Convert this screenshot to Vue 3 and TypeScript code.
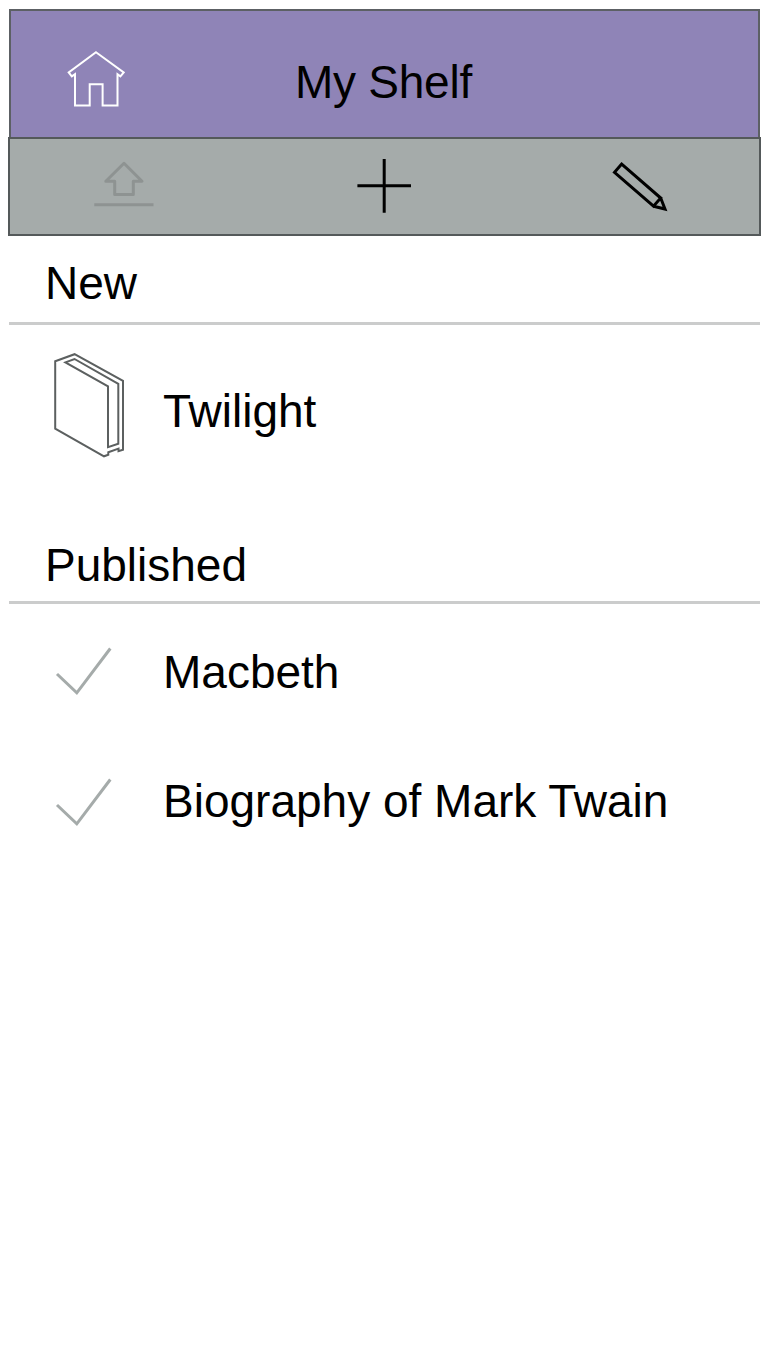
<script setup lang="ts">
interface Section {
  title: string
  kind: 'new' | 'published'
  books: string[]
}

const sections: Section[] = [
  { title: 'New', kind: 'new', books: ['Twilight'] },
  { title: 'Published', kind: 'published', books: ['Macbeth', 'Biography of Mark Twain'] },
]
</script>

<template>
  <main class="screen">
    <header class="header">
      <svg class="home" viewBox="66 50 60 58" width="60" height="58" aria-label="Home">
        <path d="M96 52.3 123.7 72.5 120.4 76.3 117.5 74.2V105.6H102.6V84.2H89.7V105.6H75V74.2L71.8 76.3 68.7 72.5Z" />
      </svg>
      <h1>My Shelf</h1>
    </header>
    <nav class="toolbar">
      <svg class="upload" viewBox="94 158 60 52" width="60" height="52" aria-label="Upload">
        <path d="M124 163.3 142 181.3H133.3V194.4H114.7V181.3H105.8Z M94.3 204.7H153.5" />
      </svg>
      <svg class="add" viewBox="357 158 55 55" width="55" height="55" aria-label="Add">
        <path d="M357.4 185.8H411M384.2 159V212.7" />
      </svg>
      <svg class="edit" viewBox="610 158 60 56" width="60" height="56" aria-label="Edit">
        <path d="M621.7 164 614.5 172.3 653.5 206.2 660.7 198ZM653.5 206.2 665 209 660.7 198" />
      </svg>
    </nav>
    <section v-for="s in sections" :key="s.kind" :class="['section', s.kind]">
      <h2>{{ s.title }}</h2>
      <ul>
        <li v-for="book in s.books" :key="book">
          <svg v-if="s.kind === 'new'" class="book" viewBox="52 350 76 110" width="76" height="110">
            <path d="M55.2 361.3 74.6 354.2 123 380.8V449.7L118.5 451.2V448.6L108.3 452.2V454.8L104 456.3 55.2 428.7Z M65.4 362.4 74.5 359 118.3 383.8V443.7L108 447.2V386.4Z" />
          </svg>
          <svg v-else class="check" viewBox="52 643 62 56" width="62" height="56">
            <path d="M57 674 76.8 692.8 110.3 648.5" />
          </svg>
          <span>{{ book }}</span>
        </li>
      </ul>
    </section>
  </main>
</template>

<style>
body {
  margin: 0;
  background: #fff;
}
</style>

<style scoped>
.screen {
  box-sizing: border-box;
  width: 768px;
  height: 1352px;
  padding: 9px 8px 0;
  overflow: hidden;
  background: #fff;
  color: #000;
  font-family: "Liberation Sans", Arial, Helvetica, sans-serif;
  font-size: 46px;
  line-height: 52px;
}
svg {
  display: block;
  flex: none;
  fill: none;
}
h1, h2, ul {
  margin: 0;
  padding: 0;
  font: inherit;
  white-space: nowrap;
}
.header {
  box-sizing: border-box;
  display: grid;
  grid-template-columns: 284px 1fr;
  align-items: start;
  width: 751px;
  height: 130px;
  margin-left: 1px;
  border: 2px solid #5c6064;
  background: #8f84b7;
}
.home {
  margin: 39px 0 0 55px;
  stroke: #fff;
  stroke-width: 2;
}
h1 {
  margin-top: 45px;
  letter-spacing: -0.25px;
}
.toolbar {
  box-sizing: border-box;
  display: flex;
  justify-content: space-between;
  width: 753px;
  height: 99px;
  margin-top: -2px;
  padding: 19px 89px 0 84px;
  border: 2px solid #54595a;
  background: #a5abaa;
}
.upload {
  stroke: #8e9392;
  stroke-width: 3;
  stroke-linejoin: round;
}
.add {
  margin-left: 4px;
  stroke: #000;
  stroke-width: 3;
}
.edit {
  stroke: #000;
  stroke-width: 3;
}
.section {
  width: 751px;
  margin-left: 1px;
}
h2 {
  box-sizing: border-box;
  padding-left: 36px;
  border-bottom: 3px solid #cbcccc;
}
.new h2 {
  height: 89px;
  padding-top: 21px;
}
.published h2 {
  height: 71px;
  padding-top: 6px;
}
.new ul {
  height: 208px;
}
li {
  display: grid;
  grid-template-columns: 111px 1fr;
  align-items: center;
  padding-left: 43px;
}
.new li {
  padding-top: 25px;
}
.new span {
  padding-top: 12px;
}
.published li {
  height: 122px;
}
.published li:first-child {
  height: 136px;
}
.book {
  stroke: #5c6060;
  stroke-width: 2;
}
.check {
  margin-top: 2px;
  stroke: #a5abaa;
  stroke-width: 3;
}
li:first-child .check {
  margin: 0 0 2px;
}
</style>
